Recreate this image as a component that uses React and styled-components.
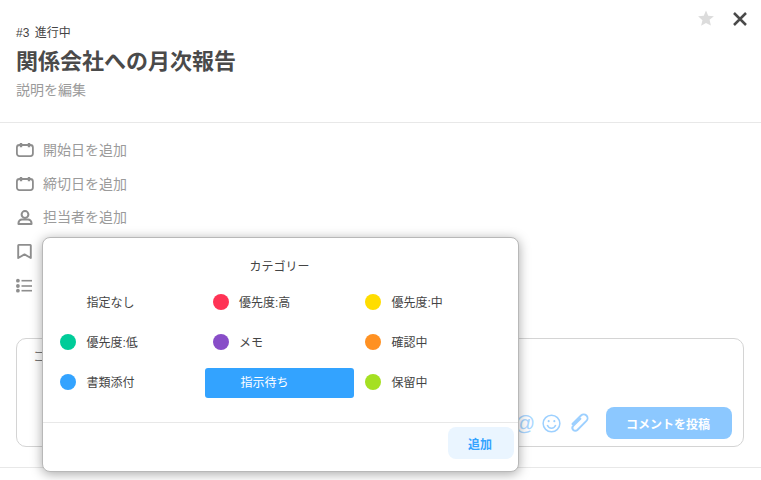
import React from "react";
import styled, { createGlobalStyle } from "styled-components";

const GlobalStyle = createGlobalStyle`
  html, body {
    margin: 0;
    padding: 0;
    background: #fff;
  }
  body {
    font-family: "Liberation Sans", "Noto Sans CJK JP", sans-serif;
    color: #444;
    overflow: hidden;
  }
  * {
    box-sizing: border-box;
  }
`;

const Page = styled.div`
  position: relative;
  width: 761px;
  height: 480px;
  overflow: hidden;
`;

const Header = styled.header`
  height: 123px;
  padding: 25px 16px 0;
  border-bottom: 1px solid #e8e8e8;
`;

const Status = styled.div`
  font-size: 12px;
  line-height: 16px;
  word-spacing: 2px;
  color: #444;
`;

const Title = styled.h1`
  margin: 5px 0 0;
  font-size: 22px;
  line-height: 32px;
  font-weight: 700;
  color: #4a4a4a;
`;

const Description = styled.div`
  margin-top: 2px;
  font-size: 14px;
  line-height: 20px;
  color: #9b9b9b;
`;

const HeaderActions = styled.div`
  position: absolute;
  top: 10px;
  right: 14px;
  display: flex;
  align-items: flex-start;
  gap: 19px;

  svg:last-child {
    margin-top: 2px;
  }
`;

const MetaList = styled.div`
  display: flex;
  flex-direction: column;
  padding: 9px 16px 0;
  height: 215px;
`;

const MetaRow = styled.div`
  display: flex;
  align-items: center;
  gap: 9px;
  height: 33.75px;
  font-size: 14px;
  color: #9b9b9b;

  svg {
    flex: none;
  }
`;

const CommentBox = styled.div`
  height: 109px;
  margin: 0 17px 0 16px;
  padding: 7px 16px 0;
  display: flex;
  flex-direction: column;
  border: 1px solid #d4d4d4;
  border-radius: 10px;
`;

const CommentPlaceholder = styled.div`
  font-size: 14px;
  line-height: 20px;
  color: #777;
`;

const CommentTools = styled.div`
  margin: 41px -5px 0 0;
  display: flex;
  align-items: center;
  justify-content: flex-end;
`;

const ToolIcons = styled.div`
  display: flex;
  align-items: center;
  gap: 7px;
  margin-right: 17px;

  svg:last-child {
    margin-left: 1px;
  }
`;

const AtSign = styled.span`
  font-size: 20px;
  line-height: 24px;
  color: #a9d6ff;
`;

const PostButton = styled.button`
  width: 126px;
  height: 32px;
  padding: 0 2px 0 0;
  border: none;
  border-radius: 8px;
  background: #8cc8ff;
  color: #fff;
  font: inherit;
  font-size: 12px;
  font-weight: 700;
`;

const BottomRule = styled.div`
  margin-top: 20px;
  border-top: 1px solid #e8e8e8;
`;

const Popover = styled.div`
  position: absolute;
  left: 42px;
  top: 237px;
  width: 477px;
  height: 235px;
  background: #fff;
  border: 1px solid #b8b8b8;
  border-radius: 8px;
  box-shadow: 0 2px 12px rgba(0, 0, 0, 0.35);
  display: flex;
  flex-direction: column;
`;

const PopoverTitle = styled.div`
  margin-top: 20px;
  padding-right: 2px;
  text-align: center;
  font-size: 12px;
  line-height: 18px;
  color: #444;
`;

const CategoryGrid = styled.div`
  margin: 7px 0 0 9px;
  display: grid;
  grid-template-columns: repeat(3, 152.5px);
  grid-auto-rows: 40px;
  height: 139px;
`;

const CategoryItem = styled.div`
  height: 30px;
  width: 149px;
  margin-top: 5px;
  padding: 0 0 3px ${({ $selected }) => ($selected ? "36px" : "34.5px")};
  display: flex;
  align-items: center;
  position: relative;
  border-radius: 3px;
  font-size: 12px;
  color: ${({ $selected }) => ($selected ? "#fff" : "#444")};
  background: ${({ $selected }) => ($selected ? "#33a3ff" : "transparent")};
`;

const Dot = styled.span`
  position: absolute;
  left: 8px;
  top: 6px;
  width: 16px;
  height: 16px;
  border-radius: 50%;
  background: ${({ $color }) => $color};
`;

const PopoverFooter = styled.div`
  flex: 1;
  display: flex;
  justify-content: flex-end;
  padding: 4px 4px 0 0;
  border-top: 1px solid #e8e8e8;
`;

const AddButton = styled.button`
  width: 66px;
  height: 32px;
  padding: 0 2px 0 0;
  border: none;
  border-radius: 8px;
  background: #eaf5ff;
  color: #33a3ff;
  font: inherit;
  font-size: 12px;
  font-weight: 700;
`;

const Calendar = () => (
  <svg width="18" height="18" viewBox="0 0 18 18" fill="none" stroke="#8e8e8e" strokeWidth="1.8">
    <rect x="0.9" y="5" width="16" height="11.100" rx="2.500" />
    <path d="M5 3v4.200M13 3v4.200" strokeWidth="2.400" />
  </svg>
);

const Person = () => (
  <svg width="18" height="18" viewBox="0 0 18 18" fill="none" stroke="#8e8e8e" strokeWidth="2">
    <circle cx="9" cy="7.500" r="3.400" />
    <path d="M2.500 17v-1c0-2 1.800-3.500 3.400-3.500h6.200c1.600 0 3.400 1.500 3.400 3.500v1z" strokeLinejoin="round" />
  </svg>
);

const Bookmark = () => (
  <svg width="18" height="18" viewBox="0 0 18 18" fill="none" stroke="#8e8e8e" strokeWidth="1.900">
    <path d="M2.800 3.900h11.400a.6.6 0 0 1 .6.600v12.500l-6.300-3.600-6.300 3.600V4.500a.6.6 0 0 1 .6-.6z" strokeLinejoin="round" />
  </svg>
);

const ListIcon = () => (
  <svg width="18" height="18" viewBox="0 0 18 18" fill="#8e8e8e">
    <circle cx="1.900" cy="5.700" r="1.900" />
    <circle cx="1.900" cy="11" r="1.900" />
    <circle cx="1.900" cy="15.700" r="1.900" />
    <rect x="5.500" y="4.900" width="10.500" height="1.600" />
    <rect x="5.500" y="10.200" width="10.500" height="1.600" />
    <rect x="5.500" y="14.900" width="10.500" height="1.600" />
  </svg>
);

const Star = () => (
  <svg width="16" height="16" viewBox="0 0 18 18" fill="#dcdcdc">
    <path d="M9 0.500l2.500 5.900 6.400.5-4.900 4.200 1.500 6.200L9 14.500l-5.500 3.300 1.500-6.200L.1 6.900l6.400-.5z" />
  </svg>
);

const Close = () => (
  <svg width="14" height="14" viewBox="0 0 14 14" fill="none" stroke="#4a4a4a" strokeWidth="2.500">
    <path d="M1 1l12 12M13 1L1 13" />
  </svg>
);

const Smile = () => (
  <svg width="19" height="19" viewBox="0 0 20 20" fill="none" stroke="#9dd0ff" strokeWidth="1.600">
    <circle cx="10" cy="10" r="8.800" />
    <path d="M5.500 11.500c1 2.400 2.600 3.400 4.500 3.400s3.500-1 4.500-3.400" />
    <circle cx="7" cy="7.500" r="1.100" fill="#9dd0ff" stroke="none" />
    <circle cx="13" cy="7.500" r="1.100" fill="#9dd0ff" stroke="none" />
  </svg>
);

const Clip = () => (
  <svg width="20" height="20" viewBox="0 0 21 20" fill="none" stroke="#9dd0ff" strokeWidth="2" strokeLinecap="round">
    <path d="M11 5l-7.500 7.500a3 3 0 0 0 4.300 4.300l9.500-9.500a4 4 0 0 0-5.700-5.700l-9 9" transform="translate(1 0.500)" />
  </svg>
);

const categories = [
  { label: "指定なし" },
  { label: "優先度:高", color: "#ff3355" },
  { label: "優先度:中", color: "#ffdd00" },
  { label: "優先度:低", color: "#00cc99" },
  { label: "メモ", color: "#884dc8" },
  { label: "確認中", color: "#ff9122" },
  { label: "書類添付", color: "#33a3ff" },
  { label: "指示待ち", selected: true },
  { label: "保留中", color: "#a5e022" },
];

export default function App() {
  return (
    <Page>
      <GlobalStyle />
      <Header>
        <Status>#3 進行中</Status>
        <Title>関係会社への月次報告</Title>
        <Description>説明を編集</Description>
      </Header>
      <HeaderActions>
        <Star />
        <Close />
      </HeaderActions>
      <MetaList>
        <MetaRow><Calendar />開始日を追加</MetaRow>
        <MetaRow><Calendar />締切日を追加</MetaRow>
        <MetaRow><Person />担当者を追加</MetaRow>
        <MetaRow><Bookmark /></MetaRow>
        <MetaRow><ListIcon /></MetaRow>
      </MetaList>
      <CommentBox>
        <CommentPlaceholder>コ</CommentPlaceholder>
        <CommentTools>
          <ToolIcons>
            <AtSign>@</AtSign>
            <Smile />
            <Clip />
          </ToolIcons>
          <PostButton>コメントを投稿</PostButton>
        </CommentTools>
      </CommentBox>
      <BottomRule />
      <Popover>
        <PopoverTitle>カテゴリー</PopoverTitle>
        <CategoryGrid>
          {categories.map((c) => (
            <CategoryItem key={c.label} $selected={c.selected}>
              {c.color && <Dot $color={c.color} />}
              {c.label}
            </CategoryItem>
          ))}
        </CategoryGrid>
        <PopoverFooter>
          <AddButton>追加</AddButton>
        </PopoverFooter>
      </Popover>
    </Page>
  );
}
